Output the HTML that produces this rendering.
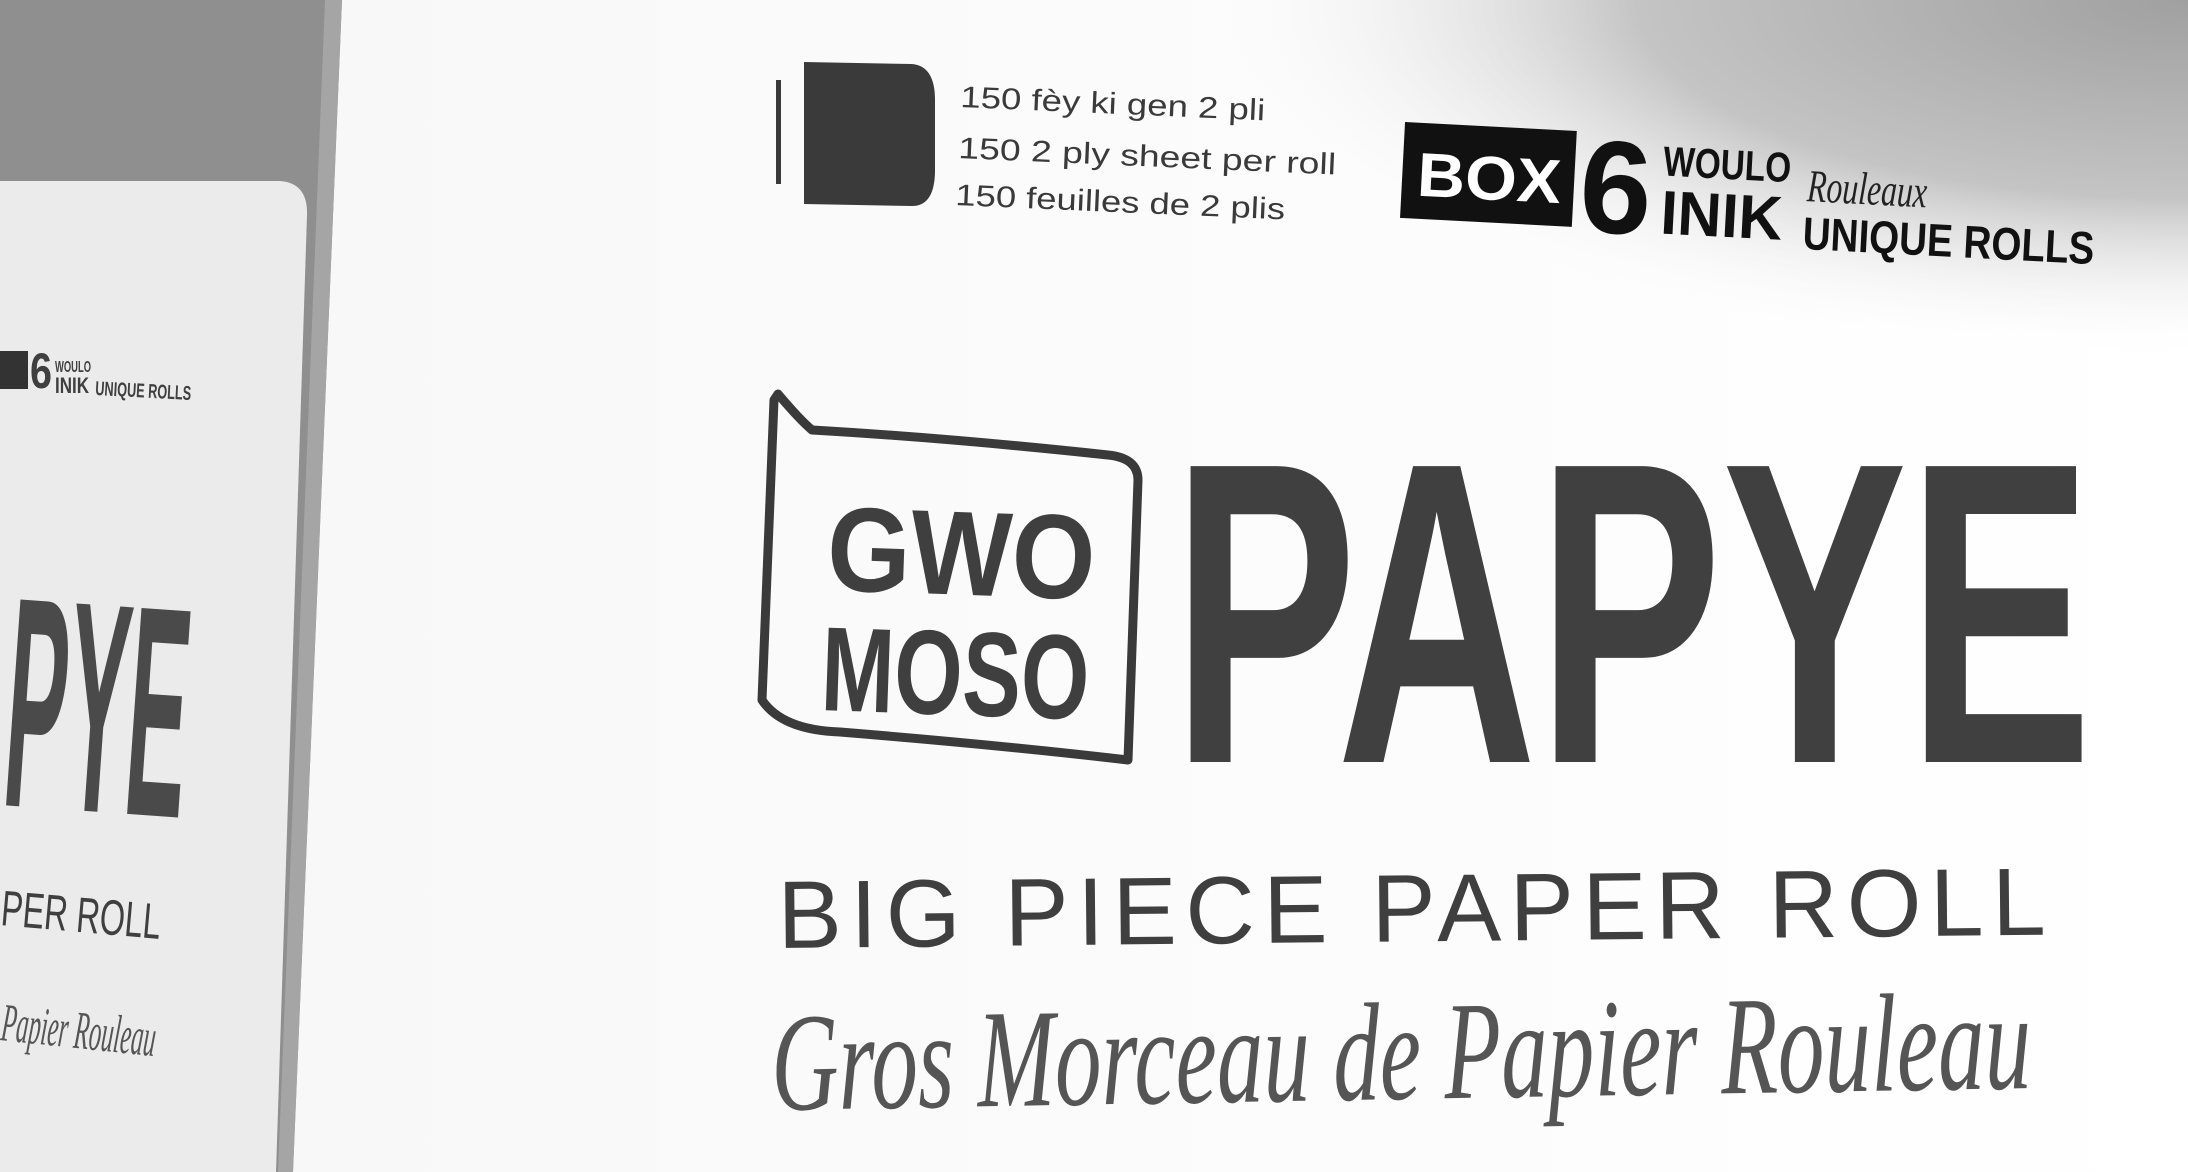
<!DOCTYPE html>
<html><head><meta charset="utf-8"><style>
html,body{margin:0;padding:0;width:2188px;height:1172px;overflow:hidden;background:#fff}
svg{display:block}
</style></head><body>
<svg width="2188" height="1172" viewBox="0 0 2188 1172" xmlns="http://www.w3.org/2000/svg">
<defs>
<radialGradient id="sh" cx="2188" cy="0" r="1000" gradientUnits="userSpaceOnUse" gradientTransform="translate(2188 0) scale(1 0.36) translate(-2188 0)">
<stop offset="0" stop-color="#a0a0a0"/>
<stop offset="0.55" stop-color="#c4c4c4"/>
<stop offset="1" stop-color="#ffffff" stop-opacity="0"/>
</radialGradient>
<linearGradient id="bg" x1="0" y1="0" x2="1" y2="0">
<stop offset="0" stop-color="#f7f7f7"/><stop offset="1" stop-color="#ffffff"/>
</linearGradient>
</defs>
<rect width="2188" height="1172" fill="url(#bg)"/>
<rect x="1100" y="0" width="1088" height="400" fill="url(#sh)"/>
<!-- left cardboard -->
<polygon points="0,0 342,0 293,1172 0,1172" fill="#8f8f8f"/>
<polygon points="325,0 342,0 293,1172 278,1172" fill="#a5a5a5"/>
<path d="M0,181 L280,181 Q308,183 307,215 L276,1172 L0,1172 Z" fill="#ebebeb"/>
<!-- left card text -->
<g fill="#3f3f3f" font-family="Liberation Sans, sans-serif" font-weight="bold">
<rect x="0" y="351" width="28" height="38" fill="#333"/>
<text x="30" y="388" font-size="50" textLength="22" lengthAdjust="spacingAndGlyphs">6</text>
<text x="55" y="372" font-size="16" textLength="36" lengthAdjust="spacingAndGlyphs">WOULO</text>
<text x="55" y="393" font-size="22" textLength="34" lengthAdjust="spacingAndGlyphs">INIK</text>
<text x="95" y="395" font-size="20" textLength="96" lengthAdjust="spacingAndGlyphs" transform="rotate(3 95 395)">UNIQUE ROLLS</text>
<text x="0" y="805" font-size="300" textLength="182" lengthAdjust="spacingAndGlyphs" fill="#4a4a4a" transform="rotate(4 0 805)">PYE</text>
<text x="0" y="925" font-size="50" textLength="160" lengthAdjust="spacingAndGlyphs" font-weight="normal" transform="rotate(5 0 925)">PER ROLL</text>
</g>
<text x="0" y="1040" font-family="Liberation Serif, serif" font-style="italic" font-size="54" fill="#555" textLength="155" lengthAdjust="spacingAndGlyphs" transform="rotate(6 0 1040)">Papier Rouleau</text>

<!-- roll icon -->
<rect x="776" y="80" width="5" height="104" fill="#3a3a3a"/>
<path d="M804,62 L912,64 Q935,66 935,100 L935,170 Q935,206 912,206 L804,204 Z" fill="#3a3a3a"/>
<g font-family="Liberation Sans, sans-serif" fill="#3a3a3a" font-size="30">
<text x="960" y="107" textLength="305" lengthAdjust="spacingAndGlyphs" transform="rotate(2.5 960 107)">150 fèy ki gen 2 pli</text>
<text x="958" y="158" textLength="378" lengthAdjust="spacingAndGlyphs" transform="rotate(2.5 958 158)">150  2 ply sheet per roll</text>
<text x="955" y="205" textLength="330" lengthAdjust="spacingAndGlyphs" transform="rotate(2.5 955 205)">150 feuilles de 2 plis</text>
</g>
<!-- BOX 6 -->
<g transform="rotate(3 1405 123)">
<rect x="1405" y="122" width="172" height="96" fill="#111"/>
<text x="1420" y="195" font-family="Liberation Sans, sans-serif" font-weight="bold" font-size="62" fill="#fff" textLength="144" lengthAdjust="spacingAndGlyphs">BOX</text>
<text x="1583" y="222" font-family="Liberation Sans, sans-serif" font-weight="bold" font-size="132" fill="#111" textLength="72" lengthAdjust="spacingAndGlyphs">6</text>
<text x="1665" y="162" font-family="Liberation Sans, sans-serif" font-weight="bold" font-size="42" fill="#111" textLength="128" lengthAdjust="spacingAndGlyphs">WOULO</text>
<text x="1665" y="220" font-family="Liberation Sans, sans-serif" font-weight="bold" font-size="62" fill="#111" textLength="122" lengthAdjust="spacingAndGlyphs">INIK</text>
<text x="1810" y="180" font-family="Liberation Serif, serif" font-style="italic" font-size="46" fill="#222" textLength="120" lengthAdjust="spacingAndGlyphs">Rouleaux</text>
<text x="1808" y="228" font-family="Liberation Sans, sans-serif" font-weight="bold" font-size="46" fill="#111" textLength="292" lengthAdjust="spacingAndGlyphs">UNIQUE ROLLS</text>
</g>
<!-- GWO MOSO flag -->
<path d="M778,394 Q800,420 812,430 Q950,438 1108,455 Q1138,458 1138,480 L1128,760 Q1000,745 840,732 Q782,730 762,700 L774,400 Z" fill="none" stroke="#3a3a3a" stroke-width="9" stroke-linejoin="round"/>
<g font-family="Liberation Sans, sans-serif" font-weight="bold" fill="#3f3f3f">
<text x="826" y="590" font-size="120" textLength="268" lengthAdjust="spacingAndGlyphs" transform="rotate(2 826 590)">GWO</text>
<text x="820" y="710" font-size="120" textLength="268" lengthAdjust="spacingAndGlyphs" transform="rotate(2 820 710)">MOSO</text>
<g transform="translate(1172 0) scale(0.78 1)">
<text x="0" y="762" font-size="430" textLength="1180" lengthAdjust="spacingAndGlyphs" fill="#404040">PAPYE</text>
</g>
</g>
<text x="778" y="948" font-family="Liberation Sans, sans-serif" font-size="96" fill="#3f3f3f" textLength="1268" lengthAdjust="spacing" transform="rotate(-0.6 778 948)">BIG PIECE PAPER ROLL</text>
<text x="772" y="1110" font-family="Liberation Serif, serif" font-style="italic" font-size="140" fill="#555" textLength="1260" lengthAdjust="spacingAndGlyphs" transform="rotate(-1 772 1110)">Gros Morceau de Papier Rouleau</text>
</svg>
</body></html>
